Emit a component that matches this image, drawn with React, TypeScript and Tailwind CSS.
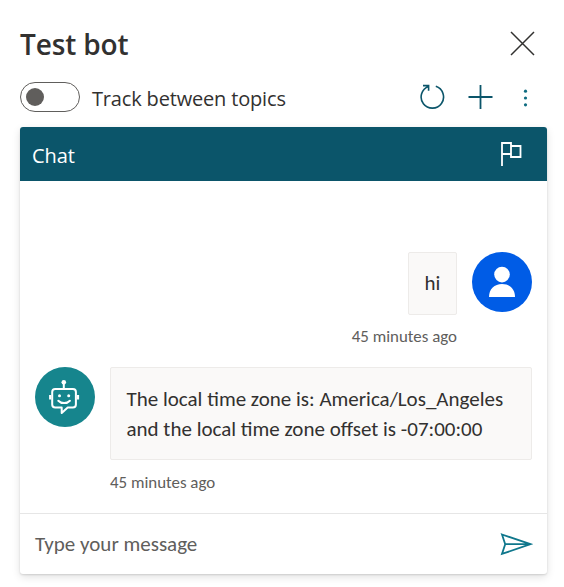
import React from "react";

const uiFont = "font-['Segoe_UI','Open_Sans','Noto_Sans',sans-serif]";
const chatFont = "font-['Calibri','Carlito','Lato',sans-serif]";

function Header() {
  return (
    <header className="flex h-[58px] items-center justify-between pr-3">
      <h1 className="whitespace-nowrap text-[28px] font-semibold leading-[38px] tracking-[-0.15px] text-[#323130]">Test bot</h1>
      <button aria-label="Close" className="-mt-[2px] block">
        <svg width="25" height="25" viewBox="0 0 25 25" fill="none" stroke="#323130" strokeWidth="1.5">
          <path d="M1 1 24 24M24 1 1 24" />
        </svg>
      </button>
    </header>
  );
}

function Toolbar() {
  return (
    <div className="flex h-[54px] items-start pt-[9px]">
      <button aria-label="Track between topics" className="flex h-[30px] w-[60px] items-center rounded-full border border-[#605e5c] pl-[5px]">
        <span className="size-[18px] rounded-full bg-[#605e5c]" />
      </button>
      <span className="ml-[12px] w-[200px] whitespace-nowrap pt-[2px] text-[20px] leading-[30px] tracking-[-0.17px] text-[#323130]">Track between topics</span>
      <div className="ml-auto flex items-start pr-[19px] pt-[2px]">
        <svg width="26" height="26" viewBox="0 0 26 26" fill="none" stroke="#0b556a" strokeWidth="1.6">
          <path d="M16.8 2.3A11.2 11.2 0 1 1 9.6 2.4M4 1.6H9.6V6.8" />
        </svg>
        <svg className="ml-[22px]" width="26" height="26" viewBox="0 0 26 26" fill="none" stroke="#0b556a" strokeWidth="1.8">
          <path d="M13.5 1V25M1.5 13H25.5" />
        </svg>
        <svg className="ml-[30px] mt-[5px]" width="5" height="18" viewBox="0 0 5 18" fill="#0f6c81">
          <circle cx="2.5" cy="2.2" r="1.6" />
          <circle cx="2.5" cy="9" r="1.6" />
          <circle cx="2.5" cy="15.8" r="1.6" />
        </svg>
      </div>
    </div>
  );
}

function UserAvatar() {
  return (
    <svg className="shrink-0" width="60" height="60" viewBox="0 0 60 60">
      <circle cx="30" cy="30" r="30" fill="#005ce6" />
      <circle cx="30" cy="22.6" r="7.8" fill="#fff" />
      <path d="M17 45c0-8 5.5-13 13-13s13 5 13 13Z" fill="#fff" />
    </svg>
  );
}

function BotAvatar() {
  return (
    <svg className="shrink-0" width="60" height="60" viewBox="0 0 60 60" fill="none" stroke="#fff" strokeWidth="2" strokeLinejoin="round">
      <circle cx="30" cy="30" r="30" fill="#16858d" stroke="none" />
      <path d="M28.8 16v6M20.2 22h17.7a3 3 0 0 1 3 3v12.4a3 3 0 0 1-3 3h-5.2L26.7 46v-5.6h-6.5a3 3 0 0 1-3-3V25a3 3 0 0 1 3-3Z" />
      <path d="M15.2 28v4.5M43 28v4.5" strokeWidth="2.2" />
      <path d="M23.3 33.7c3 3.2 8.6 3.2 11.6 0" strokeLinecap="round" />
      <circle cx="28.8" cy="15.3" r="2.3" fill="#fff" stroke="none" />
      <circle cx="24.5" cy="28.7" r="1.5" fill="#fff" stroke="none" />
      <circle cx="33.7" cy="28.7" r="1.5" fill="#fff" stroke="none" />
    </svg>
  );
}

function ChatPanel() {
  return (
    <section className="flex h-[447px] flex-col rounded-[3px] bg-white shadow-[0_1px_2px_rgba(0,0,0,0.12),0_3px_8px_rgba(0,0,0,0.12)]">
      <div className="flex h-[54px] shrink-0 items-center justify-between rounded-t-[3px] bg-[#0b556a] pl-3 pr-6">
        <span className="pt-[3px] text-[20px] leading-[28px] tracking-[-0.1px] text-white">Chat</span>
        <svg width="23" height="26" viewBox="0 0 23 26" fill="none" stroke="#fff" strokeWidth="1.8">
          <path d="M2 25V2H11V13H2M11 5H20.5V16H11V13" />
        </svg>
      </div>
      <div className={`flex h-[332px] flex-col px-[15px] pt-[71px] ${chatFont}`}>
        <div className="flex justify-end gap-[15px]">
          <div className="flex flex-col items-end">
            <div className="flex h-[63px] w-[49px] items-center justify-center rounded-[2px] border border-[#edebe9] bg-[#faf9f8] text-[21px] text-[#323130]">hi</div>
            <time className="mt-[12px] whitespace-nowrap text-[16.9px] leading-5 text-[#605e5c]">45 minutes ago</time>
          </div>
          <UserAvatar />
        </div>
        <div className="mt-[20px] flex gap-[15px]">
          <BotAvatar />
          <div className="flex flex-col">
            <div className="h-[93px] w-[422px] whitespace-nowrap rounded-[2px] border border-[#edebe9] bg-[#faf9f8] px-[15.5px] py-[16px] text-[21px] leading-[30px] text-[#323130]">
              <p>The local time zone is: America/Los_Angeles</p>
              <p>and the local time zone offset is -07:00:00</p>
            </div>
            <time className="mt-[13px] whitespace-nowrap text-[16.9px] leading-5 text-[#605e5c]">45 minutes ago</time>
          </div>
        </div>
      </div>
      <div className={`flex h-[61px] items-center justify-between border-t border-[#e6e6e6] pl-[15px] pr-[14px] ${chatFont}`}>
        <span className="whitespace-nowrap pt-[2px] text-[21px] text-[#605e5c]">Type your message</span>
        <svg width="33" height="23" viewBox="0 0 33 23" fill="none" stroke="#0f778c" strokeWidth="1.8">
          <path d="M2 1.5 30.5 11.2 2 20.9 5.2 11.2ZM5.2 11.2H30" />
        </svg>
      </div>
    </section>
  );
}

export default function App() {
  return (
    <main className={`h-[587px] w-[564px] overflow-hidden bg-white pl-5 pr-[17px] pt-[15px] ${uiFont}`}>
      <Header />
      <Toolbar />
      <ChatPanel />
    </main>
  );
}
